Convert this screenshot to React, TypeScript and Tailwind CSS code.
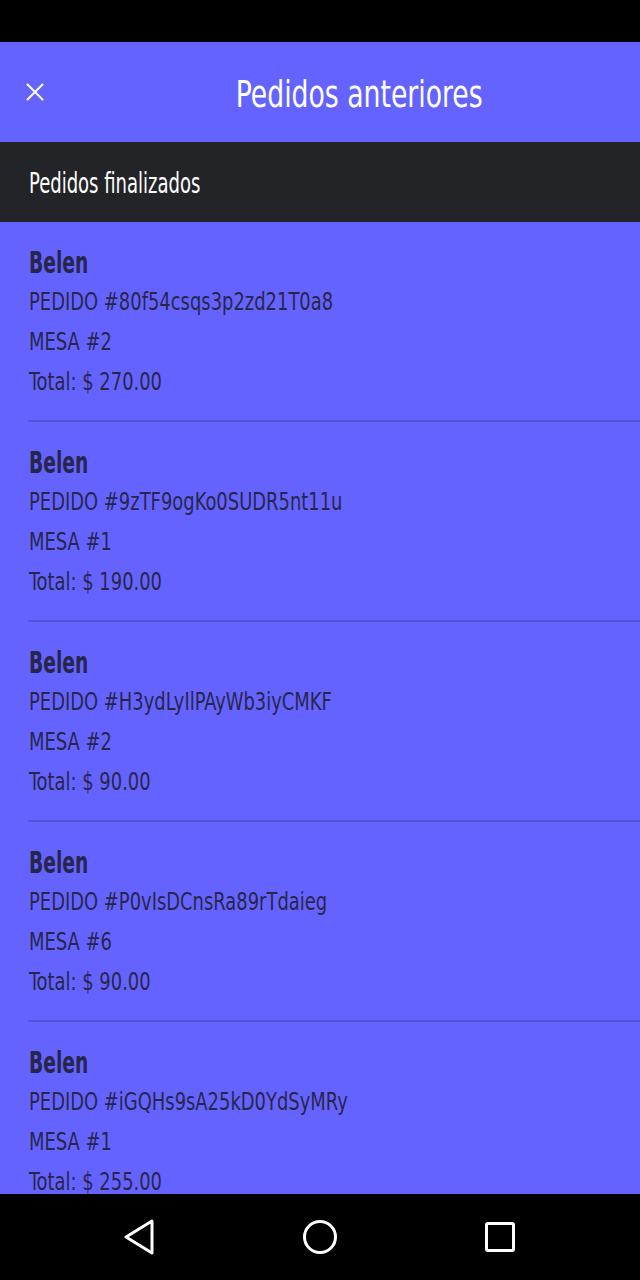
import { X } from 'lucide-react';

const orders = [
  { id: '80f54csqs3p2zd21T0a8', mesa: 2, total: '270.00' },
  { id: '9zTF9ogKo0SUDR5nt11u', mesa: 1, total: '190.00' },
  { id: 'H3ydLyIlPAyWb3iyCMKF', mesa: 2, total: '90.00' },
  { id: 'P0vIsDCnsRa89rTdaieg', mesa: 6, total: '90.00' },
  { id: 'iGQHs9sA25kD0YdSyMRy', mesa: 1, total: '255.00' },
];

const font = { fontFamily: '"DejaVu Sans Condensed", "Liberation Sans", sans-serif' };

export default function App() {
  return (
    <div className="w-[640px] h-[1280px] flex flex-col bg-black overflow-hidden" style={font}>
      {/* Status bar */}
      <div className="h-[42px] bg-black flex-shrink-0" />

      {/* Header */}
      <div className="h-[100px] bg-[#6563ff] flex items-center pl-[20px] pr-[20px] flex-shrink-0">
        <X className="w-[30px] h-[30px] text-white flex-shrink-0" strokeWidth={1.6} />
        <div className="flex-1 flex justify-center pl-[48px] pt-[4px]">
          <h1 className="inline-block text-white text-[38px] leading-none scale-x-[0.78] origin-center whitespace-nowrap">
            Pedidos anteriores
          </h1>
        </div>
      </div>

      {/* Section */}
      <div className="h-[80px] bg-[#232428] flex items-center px-[29px] flex-shrink-0">
        <span className="inline-block text-white text-[29px] leading-none scale-x-[0.69] origin-left whitespace-nowrap pt-[2px]">
          Pedidos finalizados
        </span>
      </div>

      {/* List */}
      <div className="flex-1 bg-[#6563ff] overflow-hidden">
        {orders.map((o) => (
          <div key={o.id} className="ml-[28px] h-[200px] border-b-2 border-[#5552d6] pt-[20px] pl-[1px] text-[#27264a]">
            <div className="h-[40px] flex items-center">
              <span className="inline-block text-[31px] font-bold leading-none scale-x-[0.67] origin-left">Belen</span>
            </div>
            <div className="h-[40px] flex items-center">
              <span className="inline-block text-[24px] leading-none scale-x-[0.83] origin-left whitespace-nowrap">PEDIDO #{o.id}</span>
            </div>
            <div className="h-[40px] flex items-center">
              <span className="inline-block text-[24px] leading-none scale-x-[0.83] origin-left whitespace-nowrap">MESA #{o.mesa}</span>
            </div>
            <div className="h-[40px] flex items-center">
              <span className="inline-block text-[24px] leading-none scale-x-[0.83] origin-left whitespace-nowrap">Total: $ {o.total}</span>
            </div>
          </div>
        ))}
      </div>

      {/* Nav bar */}
      <div className="h-[86px] bg-black flex items-center justify-center gap-[146px] flex-shrink-0">
        <svg width="32" height="36" viewBox="0 0 32 36" fill="none" stroke="white" strokeWidth="3" strokeLinejoin="round">
          <path d="M28 2 L2 18 L28 34 Z" />
        </svg>
        <svg width="36" height="36" viewBox="0 0 36 36" fill="none" stroke="white" strokeWidth="3">
          <circle cx="18" cy="18" r="15.5" />
        </svg>
        <svg width="32" height="32" viewBox="0 0 32 32" fill="none" stroke="white" strokeWidth="3">
          <rect x="2.5" y="2.5" width="27" height="27" rx="1.5" />
        </svg>
      </div>
    </div>
  );
}
